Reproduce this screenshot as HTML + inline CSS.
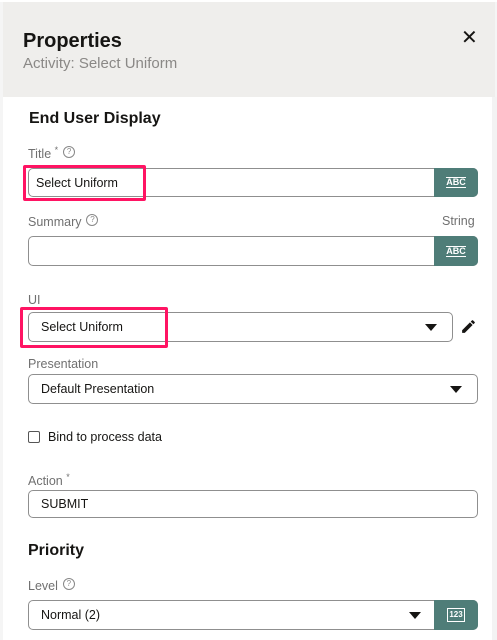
<!DOCTYPE html>
<html><head><style>
*{box-sizing:border-box;margin:0;padding:0}
body{width:497px;height:640px;overflow:hidden;background:#f5f5f5;font-family:"Liberation Sans",sans-serif;position:relative}
.a{position:absolute}
.hdr{left:3px;top:2px;width:492px;height:95px;background:#efeeec}
.panel{left:3px;top:97px;width:489px;height:543px;background:#fff}
.lbl{font-size:12.5px;color:#707070}
.inp{border:1px solid #8f8f8f;border-radius:5px;background:#fff;font-size:12.5px;color:#161513;padding-left:12px;display:flex;align-items:center}
.btn{background:#4f7d78;border-radius:0 5px 5px 0;color:#fff;font-size:9px;font-weight:bold;display:flex;align-items:center;justify-content:center}
.pink{border:3px solid #ff1463;border-radius:2px}
.tri{width:0;height:0;border-left:6px solid transparent;border-right:6px solid transparent;border-top:7px solid #161513}
.q{display:inline-block;width:12px;height:12px;border:1px solid #888;border-radius:50%;font-size:8px;line-height:10px;text-align:center;color:#888;vertical-align:4px;margin-left:5px}
h2{font-size:16px;font-weight:bold;color:#161513}
</style></head><body>
<div class="a" style="left:0;top:0;width:497px;height:2px;background:#fff"></div>
<div class="a hdr"></div>
<div class="a" style="left:23px;top:30px;font-size:20px;font-weight:bold;color:#161513">Properties</div>
<div class="a" style="left:23px;top:55px;font-size:15px;color:#8a8886">Activity: Select Uniform</div>
<div class="a" style="left:461px;top:29px;font-size:20px;color:#161513;line-height:18px">✕</div>
<div class="a panel"></div>
<div class="a" style="left:492px;top:97px;width:5px;height:543px;background:#f3f3f3"></div>
<h2 class="a" style="left:29px;top:110px">End User Display</h2>
<div class="a lbl" style="left:28px;top:145px">Title <sup style="font-size:9px">*</sup><span class="q">?</span></div>
<div class="a inp" style="left:28px;top:168px;width:450px;height:29px;padding-left:7px">Select Uniform</div>
<div class="a btn" style="left:434px;top:168px;width:44px;height:29px"><span style="border-top:1px solid #fff;border-bottom:1px solid #fff;line-height:9px">ABC</span></div>
<div class="a pink" style="left:23px;top:165px;width:123px;height:36px"></div>
<div class="a lbl" style="left:28px;top:214px">Summary<span class="q">?</span></div>
<div class="a lbl" style="left:442px;top:214px">String</div>
<div class="a inp" style="left:28px;top:236px;width:450px;height:30px"></div>
<div class="a btn" style="left:434px;top:236px;width:44px;height:30px"><span style="border-top:1px solid #fff;border-bottom:1px solid #fff;line-height:9px">ABC</span></div>
<div class="a lbl" style="left:28px;top:293px">UI</div>
<div class="a inp" style="left:28px;top:312px;width:425px;height:30px">Select Uniform</div>
<div class="a tri" style="left:425px;top:324px"></div>
<svg class="a" style="left:460px;top:318px" width="17" height="17" viewBox="0 0 24 24"><path d="M3 17.25V21h3.75L17.8 9.94l-3.75-3.75L3 17.25zM20.7 7.04a1 1 0 0 0 0-1.41l-2.34-2.34a1 1 0 0 0-1.41 0l-1.83 1.83 3.75 3.75 1.83-1.83z" fill="#161513"/></svg>
<div class="a pink" style="left:20px;top:307px;width:148px;height:41px"></div>
<div class="a lbl" style="left:28px;top:357px">Presentation</div>
<div class="a inp" style="left:28px;top:374px;width:450px;height:30px">Default Presentation</div>
<div class="a tri" style="left:450px;top:386px"></div>
<div class="a" style="left:28px;top:431px;width:12px;height:12px;border:1px solid #555;border-radius:2px"></div>
<div class="a" style="left:48px;top:430px;font-size:12.5px;color:#161513">Bind to process data</div>
<div class="a lbl" style="left:28px;top:472px">Action <sup style="font-size:9px">*</sup></div>
<div class="a inp" style="left:28px;top:490px;width:450px;height:28px">SUBMIT</div>
<h2 class="a" style="left:28px;top:542px">Priority</h2>
<div class="a lbl" style="left:28px;top:578px">Level<span class="q">?</span></div>
<div class="a inp" style="left:28px;top:600px;width:450px;height:30px">Normal (2)</div>
<div class="a tri" style="left:409px;top:612px"></div>
<div class="a btn" style="left:434px;top:600px;width:44px;height:30px"><span style="border:1px solid #fff;font-size:8px;padding:1px 1px;line-height:10px">123</span></div>
</body></html>
